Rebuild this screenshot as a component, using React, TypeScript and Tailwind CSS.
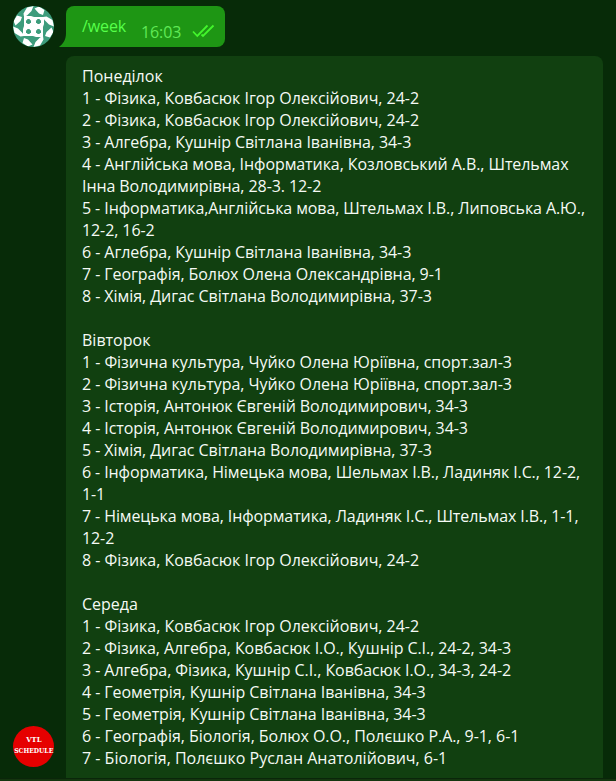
type Line = { text: string; tracking?: string };

const days: { name: string; lines: Line[] }[] = [
  {
    name: "Понеділок",
    lines: [
      { text: "1 - Фізика, Ковбасюк Ігор Олексійович, 24-2", tracking: "tracking-[-0.03px]" },
      { text: "2 - Фізика, Ковбасюк Ігор Олексійович, 24-2", tracking: "tracking-[-0.03px]" },
      { text: "3 - Алгебра, Кушнір Світлана Іванівна, 34-3" },
      { text: "4 - Англійська мова, Інформатика, Козловський А.В., Штельмах\nІнна Володимирівна, 28-3. 12-2", tracking: "tracking-[-0.08px]" },
      { text: "5 - Інформатика,Англійська мова, Штельмах І.В., Липовська А.Ю.,\n12-2, 16-2", tracking: "tracking-[-0.09px]" },
      { text: "6 - Аглебра, Кушнір Світлана Іванівна, 34-3" },
      { text: "7 - Географія, Болюх Олена Олександрівна, 9-1", tracking: "tracking-[-0.08px]" },
      { text: "8 - Хімія, Дигас Світлана Володимирівна, 37-3", tracking: "tracking-[-0.06px]" },
    ],
  },
  {
    name: "Вівторок",
    lines: [
      { text: "1 - Фізична культура, Чуйко Олена Юріївна, спорт.зал-3", tracking: "tracking-[-0.05px]" },
      { text: "2 - Фізична культура, Чуйко Олена Юріївна, спорт.зал-3", tracking: "tracking-[-0.05px]" },
      { text: "3 - Історія, Антонюк Євгеній Володимирович, 34-3" },
      { text: "4 - Історія, Антонюк Євгеній Володимирович, 34-3" },
      { text: "5 - Хімія, Дигас Світлана Володимирівна, 37-3", tracking: "tracking-[-0.06px]" },
      { text: "6 - Інформатика, Німецька мова, Шельмах І.В., Ладиняк І.С., 12-2,\n1-1", tracking: "tracking-[-0.1px]" },
      { text: "7 - Німецька мова, Інформатика, Ладиняк І.С., Штельмах І.В., 1-1,\n12-2", tracking: "tracking-[-0.1px]" },
      { text: "8 - Фізика, Ковбасюк Ігор Олексійович, 24-2", tracking: "tracking-[-0.03px]" },
    ],
  },
  {
    name: "Середа",
    lines: [
      { text: "1 - Фізика, Ковбасюк Ігор Олексійович, 24-2", tracking: "tracking-[-0.03px]" },
      { text: "2 - Фізика, Алгебра, Ковбасюк І.О., Кушнір С.І., 24-2, 34-3" },
      { text: "3 - Алгебра, Фізика, Кушнір С.І., Ковбасюк І.О., 34-3, 24-2" },
      { text: "4 - Геометрія, Кушнір Світлана Іванівна, 34-3" },
      { text: "5 - Геометрія, Кушнір Світлана Іванівна, 34-3" },
      { text: "6 - Географія, Біологія, Болюх О.О., Полєшко Р.А., 9-1, 6-1", tracking: "tracking-[-0.05px]" },
      { text: "7 - Біологія, Полєшко Руслан Анатолійович, 6-1", tracking: "tracking-normal" },
    ],
  },
];

function UserAvatar() {
  return (
    <svg viewBox="0 0 41 41" className="block size-[41px] rounded-full bg-[#3d9c7c]">
      <rect x="10" y="10" width="21" height="21" fill="#fff" />
      {[0, 90, 180, 270].map((turn) => (
        <g key={turn} transform={`rotate(${turn} 20.5 20.5)`}>
          <path d="M10.5 7.5L14 1.5L20.5 0L18.5 5L14 9.5L11 11ZM21.5 2.5L26 0.5L31.5 4L30 9L26 7.5Z" fill="#fff" />
          <path d="M18 10H31V11H21Z" fill="#3d9c7c" />
          <path d="M14.7 13H16.3L18 14.7V16.3L16.3 18H14.7L13 16.3V14.7Z" fill="#3d9c7c" />
        </g>
      ))}
    </svg>
  );
}

function BotAvatar() {
  return (
    <div className="flex size-[41px] flex-col items-center justify-center rounded-full bg-[#e60000] pb-[3px] font-['DejaVu_Serif',serif] text-[8px] font-black leading-[11px] text-white">
      <span className="scale-x-[0.86]">VTL</span>
      <span className="scale-x-[0.76]">SCHEDULE</span>
    </div>
  );
}

function Checks() {
  return (
    <svg viewBox="0 0 24 14" className="h-3.5 w-6" fill="none" stroke="#43f52c" strokeWidth="1.8">
      <path d="M1 7.5L5.3 12L15.5 1.5M9.5 10.5L11 12L21.5 1.5" />
    </svg>
  );
}

export default function App() {
  return (
    <main className="flex h-[781px] w-[616px] flex-col overflow-hidden bg-[#072b08] font-['Open_Sans',sans-serif] text-base leading-[22px]">
      <section className="flex h-14 shrink-0 pl-[13px] pt-1.5">
        <UserAvatar />
        <div className="flex h-[41px]">
          <svg viewBox="0 0 12 41" className="h-[41px] w-3" fill="#1e9614">
            <path d="M12 0V41H5C9 38 12 34 12 27Z" />
          </svg>
          <div className="flex w-[159px] rounded-r-lg rounded-tl-lg bg-[#1e9614] pl-4 text-[#56ff4a]">
            <span className="w-[59px] pt-[9px] tracking-[-0.1px]">/week</span>
            <span className="w-[50.5px] pt-[15px] tracking-[-0.1px] text-[#60e956]">16:03</span>
            <span className="pt-[18px]">
              <Checks />
            </span>
          </div>
        </div>
      </section>
      <section className="flex h-[722px] shrink-0">
        <div className="flex w-[66px] items-end pb-[11px] pl-[13px]">
          <BotAvatar />
        </div>
        <div className="w-[537px] whitespace-pre rounded-t-lg bg-[#114010] pl-4 pt-[9px] text-[#f5faf5]">
          {days.map((day) => (
            <div key={day.name} className="mb-[22px]">
              <p>{day.name}</p>
              {day.lines.map(({ text, tracking }) => (
                <p key={text} className={tracking ?? "tracking-[-0.07px]"}>
                  {text}
                </p>
              ))}
            </div>
          ))}
        </div>
      </section>
      <footer className="h-[3px] shrink-0 border-t border-[#0a260a] bg-[#14350f]" />
    </main>
  );
}
